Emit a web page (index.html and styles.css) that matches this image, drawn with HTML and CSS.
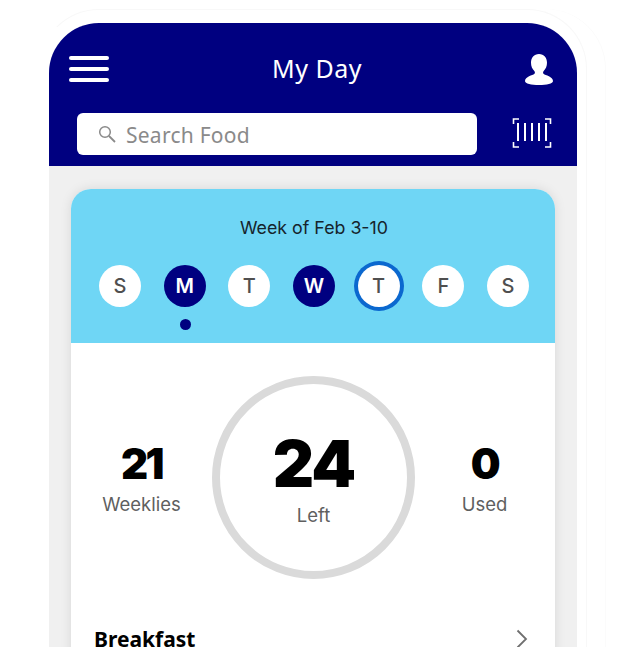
FILE: index.html
```html
<!DOCTYPE html>
<html>
<head>
  <meta charset="utf-8" />
  <title>My Day</title>
  <link rel="stylesheet" href="styles.css">
</head>
<body>

<div class="stage">
  <div class="bezel">
    <div class="phone">

      <div class="header">
        <div class="top-row">
          <div class="menu-icon"><span></span><span></span><span></span></div>
          <div class="title">My Day</div>
          <svg class="user-icon" width="28" height="31" viewBox="0 0 28 31">
            <path fill="#fff" d="M14 0c-5 0-8 3.600-8 8.800 0 3.400 1.300 6.300 3.300 8.200 .8.800 .9 2.200 0 3.100-1.500 1.300-9.300 2.500-9.300 6.900 0 2.800 6.300 4 14 4s14-1.200 14-4c0-4.400-7.800-5.600-9.300-6.900-.9-.9-.8-2.300 0-3.100 2-1.900 3.300-4.800 3.300-8.200C22 3.600 19 0 14 0z"/>
          </svg>
        </div>
        <div class="search-row">
          <div class="search-box">
            <svg class="search-icon" width="18" height="18" viewBox="0 0 18 18">
              <circle cx="7" cy="7" r="5.300" fill="none" stroke="#8a8a8a" stroke-width="1.500"/>
              <path d="M11 11l6 6" fill="none" stroke="#8a8a8a" stroke-width="1.800"/>
            </svg>
            <span class="search-text">Search Food</span>
          </div>
          <svg class="barcode-icon" width="40" height="30" viewBox="0 0 40 30">
            <path fill="none" stroke="#fff" stroke-width="1.600" d="M7 1H1.500V6M33 1h5.500V6M7 29H1.500V24M33 29h5.500V24"/>
            <path fill="none" stroke="#fff" stroke-width="2" d="M6 5v18M13 5v18M20 5v18M27 5v18M34 5v18"/>
          </svg>
        </div>
      </div>

      <div class="content">
        <div class="card">
          <div class="week">
            <div class="week-title">Week of Feb 3-10</div>
            <div class="days">
              <div class="day">S</div>
              <div class="day tracked">M<i class="dot"></i></div>
              <div class="day">T</div>
              <div class="day tracked">W</div>
              <div class="day today">T</div>
              <div class="day">F</div>
              <div class="day">S</div>
            </div>
          </div>

          <div class="stats">
            <div class="stat">
              <div class="num">21</div>
              <div class="label">Weeklies</div>
            </div>
            <div class="ring">
              <div class="num big">24</div>
              <div class="label">Left</div>
            </div>
            <div class="stat">
              <div class="num">0</div>
              <div class="label">Used</div>
            </div>
          </div>

          <div class="meal">
            <span class="meal-name">Breakfast</span>
            <svg width="14" height="20" viewBox="0 0 14 20">
              <path d="M2.500 1.500L11 10l-8.500 8.500" fill="none" stroke="#6f6f6f" stroke-width="1.800"/>
            </svg>
          </div>
        </div>
      </div>

    </div>
  </div>
</div>

</body>
</html>
```

FILE: styles.css
```css
html, body {
  margin: 0;
  background: #fff;
}
.stage {
  height: 647px;
  overflow: hidden;
  padding-top: 9px;
  box-sizing: border-box;
}
.bezel {
  width: 528px;
  height: 700px;
  margin-left: 39px;
  padding: 13px 9px 0;
  border: 1px solid #f8f8f8;
  border-left-color: transparent;
  border-radius: 60px;
  box-shadow: 18px 0 0 0 #fff, 19px 0 0 0 #fbfbfb;
}
.phone {
  border-radius: 50px 50px 0 0;
  overflow: hidden;
  font-family: "Noto Sans", sans-serif;
  background: #f0f0f0;
  height: 700px;
}

.header {
  background: #000080;
  height: 143px;
  padding: 0 24px 0 20px;
  box-sizing: border-box;
}
.top-row {
  display: flex;
  align-items: center;
  justify-content: space-between;
  padding-top: 30px;
  height: 32px;
}
.menu-icon {
  display: flex;
  flex-direction: column;
  gap: 7px;
  width: 40px;
}
.menu-icon span {
  height: 4px;
  background: #fff;
  border-radius: 2px;
}
.title {
  color: #fff;
  font-size: 25px;
  letter-spacing: .5px;
  margin-bottom: 2px;
}
.search-row {
  display: flex;
  align-items: center;
  justify-content: space-between;
  margin-top: 28px;
  padding-left: 8px;
}
.search-box {
  width: 400px;
  height: 42px;
  background: #fff;
  border-radius: 6px;
  display: flex;
  align-items: center;
  padding-left: 21px;
  box-sizing: border-box;
}
.search-text {
  color: #8a8a8a;
  font-size: 21px;
  letter-spacing: .25px;
  margin: 2px 0 0 10px;
}
.barcode-icon {
  margin: -2px 1px 0 0;
}

.content {
  padding: 23px 22px 0;
}
.card {
  background: #fff;
  border-radius: 20px 20px 0 0;
  overflow: hidden;
  box-shadow: 0 0 12px rgba(0,0,0,.1);
  height: 600px;
}
.week {
  background: #6fd6f5;
  height: 154px;
  padding: 26px 26px 0 28px;
  box-sizing: border-box;
  font-family: Inter, sans-serif;
}
.week-title {
  text-align: center;
  font-size: 17.800px;
  line-height: 26px;
  color: #16242c;
}
.days {
  display: flex;
  justify-content: space-between;
  margin-top: 24px;
}
.day {
  position: relative;
  width: 42px;
  height: 42px;
  border-radius: 50%;
  background: #fff;
  color: #4f4f4f;
  font-size: 20px;
  font-weight: 500;
  display: flex;
  align-items: center;
  justify-content: center;
}
.day.tracked {
  background: #000080;
  color: #fff;
  font-weight: 600;
}
.day.today {
  box-shadow: 0 0 0 4px #0b68cf;
}
.dot {
  position: absolute;
  left: 16px;
  top: 54px;
  width: 11px;
  height: 11px;
  border-radius: 50%;
  background: #000080;
}

.stats {
  display: flex;
  align-items: center;
  padding-top: 33px;
}
.stat {
  text-align: center;
  width: 141px;
  padding-top: 3px;
}
.stat:last-child {
  width: 139px;
}
.ring {
  width: 203px;
  height: 203px;
  border: 8px solid #dadada;
  border-radius: 50%;
  box-sizing: border-box;
  padding-top: 3px;
  display: flex;
  flex-direction: column;
  align-items: center;
  justify-content: center;
  flex: none;
}
.num {
  font-family: Inter, sans-serif;
  font-weight: 900;
  font-size: 42px;
  line-height: 46px;
  letter-spacing: -2.500px;
  color: #000;
}
.num.big {
  font-size: 64px;
  line-height: 68px;
  letter-spacing: -2px;
}
.label {
  font-family: Inter, sans-serif;
  font-size: 18.500px;
  line-height: 26px;
  margin-top: 4px;
  color: #5f5f5f;
}

.meal {
  display: flex;
  align-items: center;
  justify-content: space-between;
  padding: 46px 26px 0 23px;
}
.meal-name {
  font-size: 21px;
  font-weight: 700;
  color: #000;
}
```
